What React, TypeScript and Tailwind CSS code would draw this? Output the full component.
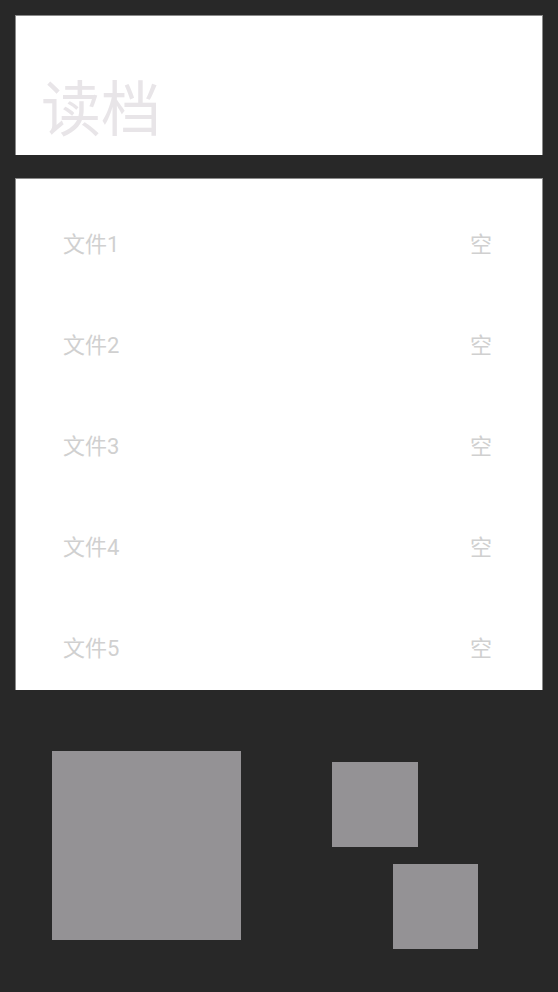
import type React from 'react'

const FILES = ['文件1', '文件2', '文件3', '文件4', '文件5']

const App: React.FC = () => {
  return (
    <div
      className="w-[558px] h-[992px] bg-[#282828] flex flex-col overflow-hidden"
      style={{ fontFamily: 'Roboto, "Noto Sans CJK SC", sans-serif' }}
    >
      {/* 标题 */}
      <div className="mt-[15px] ml-[15px] w-[528px] h-[140px] bg-white border-x border-t border-[#8a8a8a] flex items-end pl-[25px] pb-[14px]">
        <span className="text-[60px] leading-none text-[#e8e5e8]">读档</span>
      </div>

      {/* 存档列表 */}
      <div className="mt-[23px] ml-[15px] w-[528px] h-[512px] bg-white border-x border-t border-[#8a8a8a] flex flex-col gap-[77px] pt-[54px] pl-[47px] pr-[50px]">
        {FILES.map((name) => (
          <div key={name} className="flex items-center justify-between h-[24px] text-[22px] leading-none text-[#d0d0d0]">
            <span>{name}</span>
            <span>空</span>
          </div>
        ))}
      </div>

      {/* 底部方块 */}
      <div className="flex mt-[61px] pl-[52px]">
        <div className="w-[189px] h-[189px] bg-[#949295]" />
        <div className="flex flex-col ml-[91px] mt-[11px] gap-[17px]">
          <div className="w-[86px] h-[85px] bg-[#949295]" />
          <div className="ml-[61px] w-[85px] h-[85px] bg-[#949295]" />
        </div>
      </div>
    </div>
  )
}

export default App
